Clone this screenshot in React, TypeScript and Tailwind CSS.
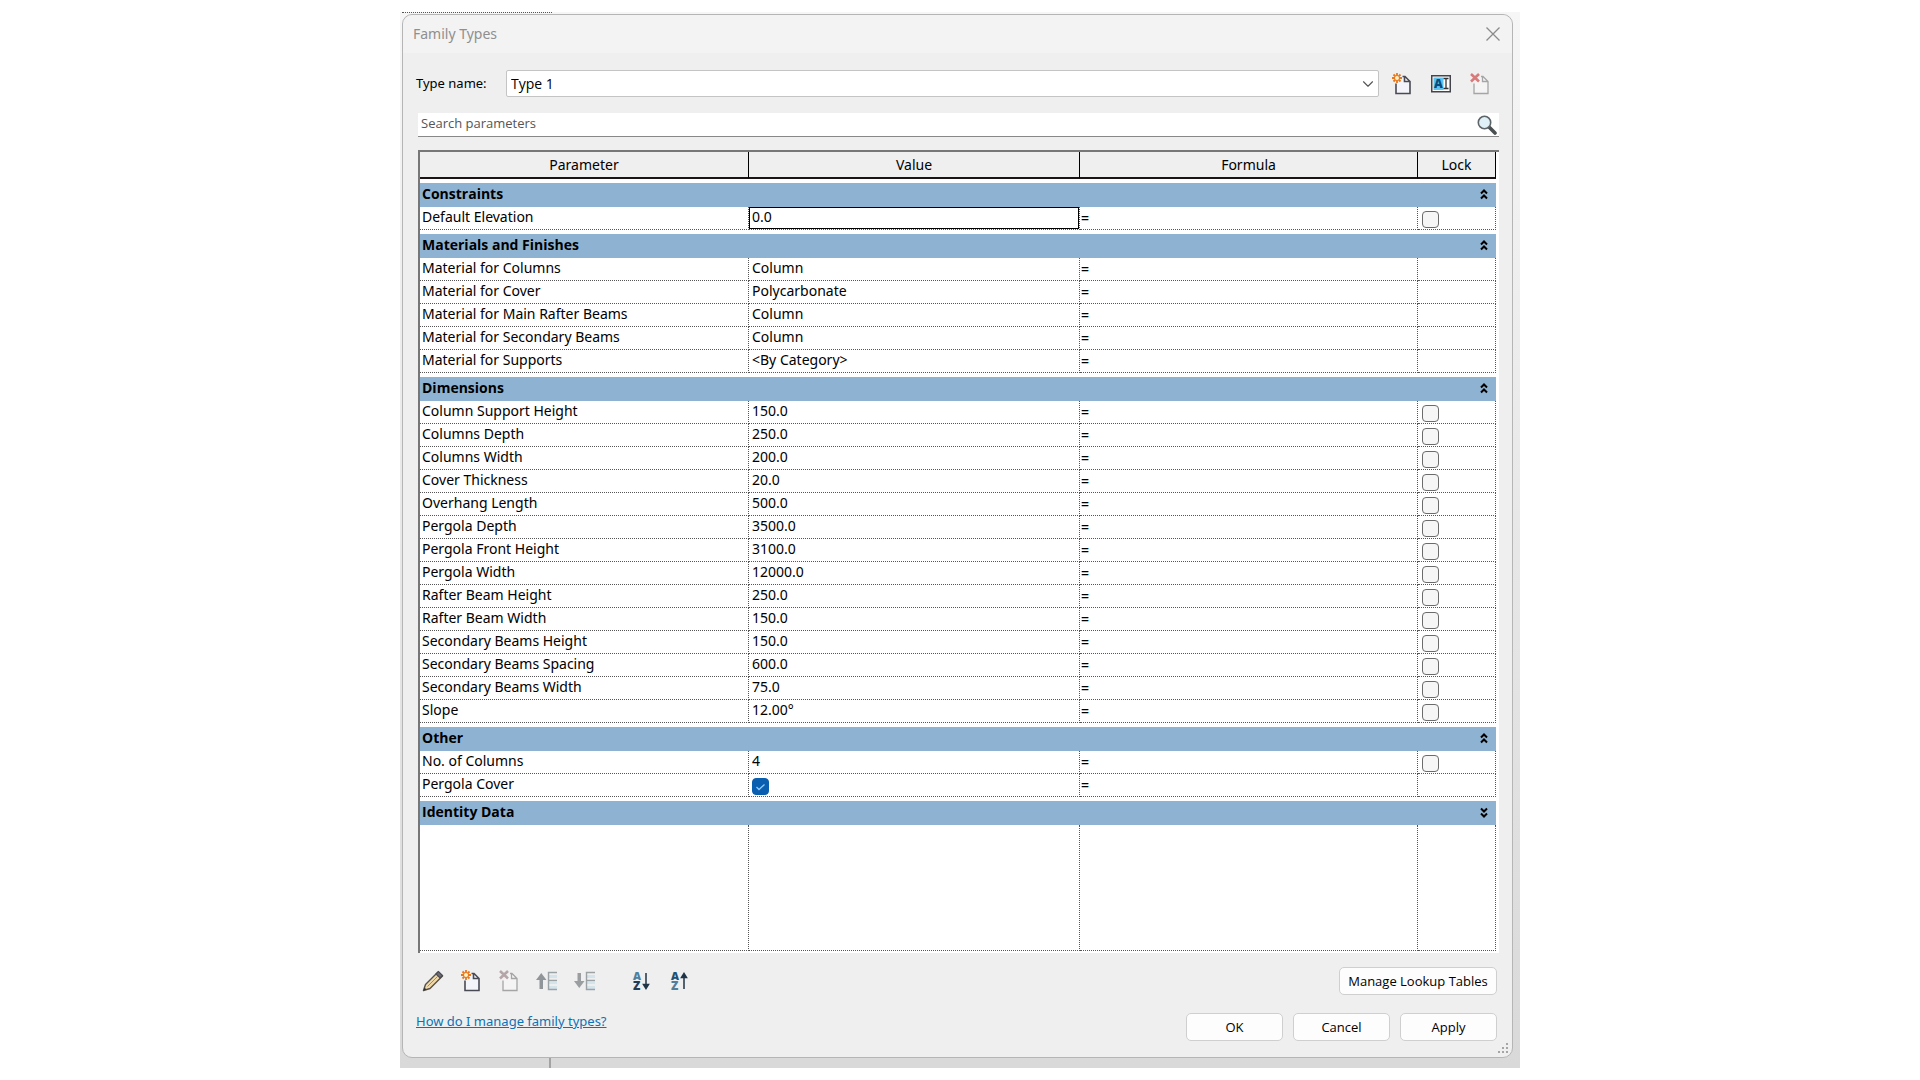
import type { ReactNode } from "react";
import clsx from "clsx";
import { ChevronDown } from "lucide-react";

type Row = {
  name: string;
  value: string | boolean;
  lock?: boolean;
  active?: boolean;
};

type Section = {
  title: string;
  collapsed?: boolean;
  rows: Row[];
};

const sections: Section[] = [
  {
    title: "Constraints",
    rows: [{ name: "Default Elevation", value: "0.0", lock: true, active: true }],
  },
  {
    title: "Materials and Finishes",
    rows: [
      { name: "Material for Columns", value: "Column" },
      { name: "Material for Cover", value: "Polycarbonate" },
      { name: "Material for Main Rafter Beams", value: "Column" },
      { name: "Material for Secondary Beams", value: "Column" },
      { name: "Material for Supports", value: "<By Category>" },
    ],
  },
  {
    title: "Dimensions",
    rows: [
      { name: "Column Support Height", value: "150.0", lock: true },
      { name: "Columns Depth", value: "250.0", lock: true },
      { name: "Columns Width", value: "200.0", lock: true },
      { name: "Cover Thickness", value: "20.0", lock: true },
      { name: "Overhang Length", value: "500.0", lock: true },
      { name: "Pergola Depth", value: "3500.0", lock: true },
      { name: "Pergola Front Height", value: "3100.0", lock: true },
      { name: "Pergola Width", value: "12000.0", lock: true },
      { name: "Rafter Beam Height", value: "250.0", lock: true },
      { name: "Rafter Beam Width", value: "150.0", lock: true },
      { name: "Secondary Beams Height", value: "150.0", lock: true },
      { name: "Secondary Beams Spacing", value: "600.0", lock: true },
      { name: "Secondary Beams Width", value: "75.0", lock: true },
      { name: "Slope", value: "12.00°", lock: true },
    ],
  },
  {
    title: "Other",
    rows: [
      { name: "No. of Columns", value: "4", lock: true },
      { name: "Pergola Cover", value: true },
    ],
  },
  { title: "Identity Data", collapsed: true, rows: [] },
];

function IconButton({ label, children, disabled }: { label: string; children: ReactNode; disabled?: boolean }) {
  return (
    <button type="button" aria-label={label} disabled={disabled} className="flex h-6 w-6 shrink-0 items-center justify-center">
      {children}
    </button>
  );
}

function NewIcon() {
  return (
    <svg viewBox="0 0 20 22" className="h-[22px] w-5" fill="none">
      <path d="M4 10.5V20.5H18V8.5L13 3.5H10.5" fill="#f4f5fa" />
      <path d="M4 10.5V20.5H18V8.5L13 3.5H10.5M12.5 3.5V8.5H18" stroke="#4a4a55" strokeWidth="1.6" />
      <path d="M5 0V10M0 5H10M1.5 1.5L8.5 8.5M8.5 1.5L1.5 8.5" stroke="#e8761a" strokeWidth="1.8" />
      <circle cx="5" cy="5" r="2" fill="#fff3c4" />
    </svg>
  );
}

function DeleteIcon({ red }: { red?: boolean }) {
  return (
    <svg viewBox="0 0 20 22" className="h-[22px] w-5" fill="none">
      <path d="M4 10.5V20.5H18V8.5L13 3.5H11M12.5 3.5V8.5H18" fill="#f4f4f4" stroke="#a5a5a5" strokeWidth="1.3" />
      <path d="M1 1L9 8.5M9 1L1 8.5" stroke={red ? "#d77a7a" : "#b5a5a8"} strokeWidth="2.6" />
    </svg>
  );
}

function RenameIcon() {
  return (
    <svg viewBox="0 0 20 18" className="h-[18px] w-5 overflow-visible" fill="none">
      <rect x="0.75" y="0.75" width="18.5" height="16" fill="#fff" stroke="#44444c" strokeWidth="1.5" />
      <rect x="2.5" y="2.5" width="10" height="12.5" fill="#5cc4ee" />
      <text x="3" y="13" fontFamily="Open Sans, sans-serif" fontSize="12" fontWeight="800" fill="#0b4a7d">
        A
      </text>
      <path d="M12.5 3.5H17.5M15 3.5V13.5M12.5 13.5H17.5" stroke="#333" strokeWidth="1.3" />
    </svg>
  );
}

function SearchIcon() {
  return (
    <svg viewBox="0 0 20 20" className="h-5 w-5" fill="none">
      <path d="M12.5 12.5L18 18" stroke="#4a4f52" strokeWidth="3.6" strokeLinecap="round" />
      <circle cx="7.5" cy="7.5" r="6.2" fill="#dff0f6" stroke="#5d6467" strokeWidth="1.6" />
    </svg>
  );
}

function PencilIcon() {
  return (
    <svg viewBox="0 0 22 22" className="h-[22px] w-[22px]" fill="none">
      <path d="M1.5 20.5L3.5 14.5L16 2L20.5 6L8 18.5Z" fill="#f0d9a8" stroke="#55504a" strokeWidth="1.4" strokeLinejoin="round" />
      <path d="M14 4L16.5 1.5L20.5 5.5L18 8Z" fill="#6d6d78" stroke="#4b4b52" strokeWidth="1.2" />
      <path d="M1.5 20.5L2.5 17.5L4.5 19.5Z" fill="#333" />
      <path d="M5.5 16.5L16 6" stroke="#a98b5b" />
    </svg>
  );
}

function MoveIcon({ down }: { down?: boolean }) {
  return (
    <svg viewBox="0 0 22 20" className="h-5 w-[22px]" fill="none">
      {down ? (
        <path d="M3.5 2H7V10H10.5L5.25 17L0 10H3.5Z" fill="#9a9ea1" />
      ) : (
        <path d="M3.5 18H7V9H10.5L5.25 2L0 9H3.5Z" fill="#8f9598" />
      )}
      <path d="M13 4H21V7H13ZM13 11H21V13H13ZM13 15H21V18H13Z" fill="#d5e3eb" />
      <path d="M21 1.5H12.5V18.5H21M12.5 9.5H21" stroke="#9ba2a6" strokeWidth="1.4" />
    </svg>
  );
}

function SortIcon({ up }: { up?: boolean }) {
  return (
    <svg viewBox="0 0 18 20" className="h-5 w-[18px] overflow-visible" fill="none">
      <text x="1" y="9" fontFamily="Open Sans, sans-serif" fontSize="11" fontWeight="800" fill={up ? "#24506f" : "#4f7f9c"}>
        A
      </text>
      <text x="1" y="19" fontFamily="Open Sans, sans-serif" fontSize="12" fontWeight="800" fill={up ? "#4f7f9c" : "#1f3f59"}>
        Z
      </text>
      {up ? (
        <path d="M14 18V4M11.5 6.5L14 2.5L16.5 6.5Z" fill="#1f3547" stroke="#1f3547" strokeWidth="1.5" />
      ) : (
        <path d="M14 2V15M11.5 13.5L14 17.5L16.5 13.5Z" fill="#1f3547" stroke="#1f3547" strokeWidth="1.5" />
      )}
    </svg>
  );
}

function DoubleChevron({ down }: { down?: boolean }) {
  return (
    <svg viewBox="0 0 8 11" className={clsx("h-[11px] w-2", down && "rotate-180")} fill="none">
      <path d="M1 4.5L4 1.5L7 4.5M1 9.5L4 6.5L7 9.5" stroke="#000" strokeWidth="2" />
    </svg>
  );
}

function Checkbox({ label, checked }: { label: string; checked?: boolean }) {
  return (
    <span className="relative mt-1 block h-[17px] w-[17px]">
      <input
        type="checkbox"
        aria-label={label}
        defaultChecked={checked}
        className="peer block h-[17px] w-[17px] appearance-none rounded-[4px] border border-[#6b6b6b] bg-[#f6f6f6] checked:border-[#0a5eb0] checked:bg-[#0a5eb0]"
      />
      <svg viewBox="0 0 17 17" className="pointer-events-none absolute inset-0 hidden peer-checked:block" fill="none">
        <path d="M4.5 9L7 11.5L12.5 6.5" stroke="#8ecbff" strokeWidth="1.3" />
      </svg>
    </span>
  );
}

function ParameterRow({ row }: { row: Row }) {
  const cell = "h-[23px] border-b border-r border-dotted border-[#555] p-0 align-top";
  return (
    <tr>
      <td className={clsx(cell, "pl-[2px] leading-5")}>{row.name}</td>
      <td className={cell}>
        {typeof row.value === "string" ? (
          <input
            aria-label={row.name}
            defaultValue={row.value}
            className={clsx(
              "block h-[22px] w-full pb-[3px] outline-none",
              row.active ? "border border-black px-[2px]" : "px-[3px]"
            )}
          />
        ) : (
          <div className="pl-[3px]">
            <Checkbox label={row.name} checked={row.value} />
          </div>
        )}
      </td>
      <td className={clsx(cell, "pl-[1px] font-semibold leading-[22px]")}>=</td>
      <td className={clsx(cell, "pl-1")}>{row.lock && <Checkbox label={`Lock ${row.name}`} />}</td>
    </tr>
  );
}

function ParameterTable() {
  const head = "h-[27px] border-b-2 border-r border-b-[#1c1414] border-r-black p-0 font-normal";
  const blank = "h-[126px] border-b border-r border-dotted border-[#555]";
  return (
    <div className="ml-[2px] mt-[13px] border-l-2 border-t-2 border-[#777] bg-white pb-[2px] pr-[3px]">
      <table className="w-full table-fixed border-separate border-spacing-0 font-['Noto_Sans',sans-serif]">
        <colgroup>
          <col className="w-[329px]" />
          <col className="w-[331px]" />
          <col />
          <col className="w-[78px]" />
        </colgroup>
        <thead className="bg-[#efefef]">
          <tr>
            <th className={head}>Parameter</th>
            <th className={head}>Value</th>
            <th className={head}>Formula</th>
            <th className={head}>Lock</th>
          </tr>
        </thead>
        {sections.map((section) => (
          <tbody key={section.title}>
            <tr>
              <th
                colSpan={4}
                className="h-7 border-t-4 border-white bg-[#8eb3d2] p-0 pl-[2px] text-left font-['Open_Sans',sans-serif] font-bold"
              >
                <div className="flex items-center justify-between pb-[2px] pr-2">
                  {section.title}
                  <button type="button" aria-label={`Toggle ${section.title}`}>
                    <DoubleChevron down={section.collapsed} />
                  </button>
                </div>
              </th>
            </tr>
            {section.rows.map((row) => (
              <ParameterRow key={row.name} row={row} />
            ))}
          </tbody>
        ))}
        <tbody>
          <tr>
            <td className={blank} />
            <td className={blank} />
            <td className={blank} />
            <td className={blank} />
          </tr>
        </tbody>
      </table>
    </div>
  );
}

function DialogButton({ children, wide }: { children: ReactNode; wide?: boolean }) {
  return (
    <button
      type="button"
      className={clsx("h-7 rounded-[5px] border border-[#cfcfcf] bg-[#fdfdfd]", wide ? "w-[158px]" : "w-[97px]")}
    >
      {children}
    </button>
  );
}

export default function App() {
  return (
    <main className="min-h-screen bg-white pt-3 font-['Open_Sans',sans-serif] text-sm text-black">
      <div className="mx-auto max-w-[1120px] bg-linear-to-b from-[#f6f6f6] to-[#d9d9d9] pl-[2px] pr-[7px]">
        <div className="h-[2px] w-[150px] border-t border-dotted border-[#555]" />
        <section aria-labelledby="dialog-title" className="relative rounded-[10px] border border-[#b5b5b5] bg-[#efefef] pb-4">
          <header className="flex h-[38px] items-center justify-between rounded-t-[10px] bg-[#f3f3f3] pl-[10px] pr-3">
            <h1 id="dialog-title" className="font-['Noto_Sans',sans-serif] text-[#8f8f8f]">
              Family Types
            </h1>
            <button type="button" aria-label="Close">
              <svg viewBox="0 0 14 14" className="h-[14px] w-[14px]" stroke="#8a8a8a" strokeWidth="1.3">
                <path d="M0.5 0.5L13.5 13.5M13.5 0.5L0.5 13.5" />
              </svg>
            </button>
          </header>

          <div className="pl-[13px] pr-[13px] pt-[17px]">
            <div className="flex items-center">
              <label htmlFor="type-name" className="w-[90px] shrink-0 font-['Noto_Sans',sans-serif] text-[13px]">
                Type name:
              </label>
              <div className="relative grow">
                <select
                  id="type-name"
                  className="block h-[27px] w-full appearance-none rounded-[2px] border border-[#c4c4c4] bg-white pl-1"
                >
                  <option>Type 1</option>
                </select>
                <ChevronDown className="pointer-events-none absolute right-[2px] top-[5px] h-[18px] w-[18px] text-[#555]" strokeWidth={1.5} />
              </div>
              <div className="flex gap-[15px] pl-[11px] pr-[7px]">
                <IconButton label="New type">
                  <NewIcon />
                </IconButton>
                <IconButton label="Rename type">
                  <RenameIcon />
                </IconButton>
                <IconButton label="Delete type" disabled>
                  <DeleteIcon red />
                </IconButton>
              </div>
            </div>

            <div className="ml-[2px] mt-4 flex h-6 items-center border-b border-[#888] bg-white pr-[2px] text-[13px]">
              <input
                type="search"
                aria-label="Search parameters"
                placeholder="Search parameters"
                className="grow pb-[2px] pl-[3px] font-medium outline-none placeholder:text-[#555]"
              />
              <button type="button" aria-label="Search">
                <SearchIcon />
              </button>
            </div>

            <ParameterTable />

            <div className="mt-[14px] flex items-center justify-between pr-[2px] text-[13px]">
              <div className="flex gap-[14px] pl-[5px]">
                <IconButton label="Edit parameter">
                  <PencilIcon />
                </IconButton>
                <IconButton label="New parameter">
                  <NewIcon />
                </IconButton>
                <IconButton label="Delete parameter" disabled>
                  <DeleteIcon />
                </IconButton>
                <IconButton label="Move up" disabled>
                  <MoveIcon />
                </IconButton>
                <IconButton label="Move down" disabled>
                  <MoveIcon down />
                </IconButton>
                <div className="flex gap-[14px] pl-[18px]">
                  <IconButton label="Sort ascending">
                    <SortIcon />
                  </IconButton>
                  <IconButton label="Sort descending">
                    <SortIcon up />
                  </IconButton>
                </div>
              </div>
              <DialogButton wide>Manage Lookup Tables</DialogButton>
            </div>

            <div className="mt-[18px] flex items-start justify-between pr-[2px] text-[13px]">
              <a href="#help" className="font-['Noto_Sans',sans-serif] leading-4 text-[#0d72b5] underline">
                How do I manage family types?
              </a>
              <div className="flex gap-[10px]">
                <DialogButton>OK</DialogButton>
                <DialogButton>Cancel</DialogButton>
                <DialogButton>Apply</DialogButton>
              </div>
            </div>
          </div>

          <svg viewBox="0 0 12 12" className="absolute bottom-[2px] right-[2px] h-3 w-3" fill="#a5a5a5">
            <path d="M8 0h2v2h-2zM4 4h2v2h-2zM8 4h2v2h-2zM0 8h2v2h-2zM4 8h2v2h-2zM8 8h2v2h-2z" />
          </svg>
        </section>
        <div className="h-[10px] w-[149px] border-r-2 border-[#a3a3a3]" />
      </div>
    </main>
  );
}
